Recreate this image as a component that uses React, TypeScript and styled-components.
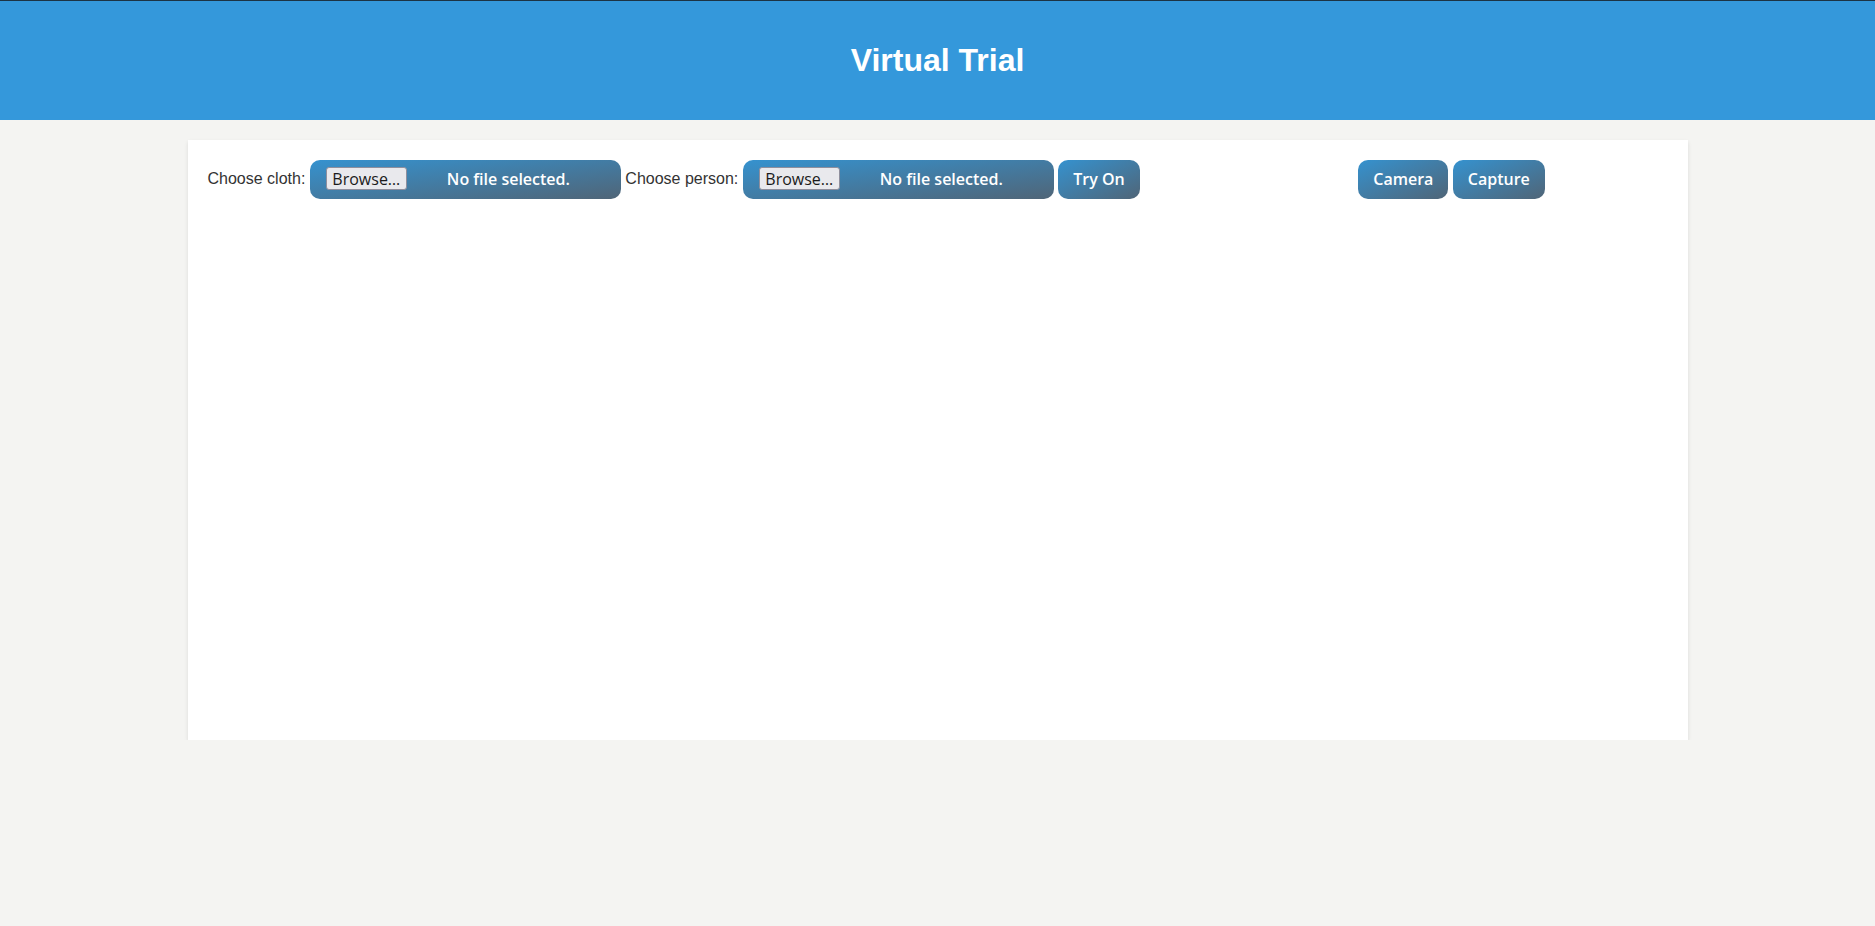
import React from 'react'
import styled, { createGlobalStyle } from 'styled-components'

const colors = {
  header: '#3498db',
  page: '#f4f4f2',
  text: '#333333',
  gradStart: '#3592cf',
  gradEnd: '#506577'
}

const GlobalStyle = createGlobalStyle`
  html, body {
    margin: 0;
    padding: 0;
    background-color: ${colors.page};
    font-family: "Liberation Sans", Arial, sans-serif;
  }
`

const Header = styled.header`
  background-color: ${colors.header};
  border-top: 1px solid #1c3344;
  padding: 20px;
  height: 120px;
  box-sizing: border-box;
  text-align: center;

  h1 {
    margin: 21px 0 0;
    color: #ffffff;
    font-size: 32px;
    font-weight: 700;
    line-height: 37px;
  }
`

const Card = styled.main`
  width: 1500px;
  height: 600px;
  box-sizing: border-box;
  margin: 20px auto 0;
  padding: 20px;
  background-color: #ffffff;
  box-shadow: 0 2px 4px rgba(0, 0, 0, 0.1);
`

const Controls = styled.div`
  display: flex;
  align-items: center;
  gap: 4.5px;
  height: 39px;
`

const Label = styled.span`
  color: ${colors.text};
  font-size: 16px;
  line-height: 18px;
  margin-bottom: 2px;
`

const gradient = `linear-gradient(to bottom right, ${colors.gradStart}, ${colors.gradEnd})`

const FilePicker = styled.label`
  display: inline-flex;
  align-items: center;
  width: 311px;
  height: 39px;
  box-sizing: border-box;
  padding: 0 16px 2px;
  border-radius: 10px;
  background: ${gradient};
  color: #ffffff;
  font-family: "Open Sans", "Noto Sans", sans-serif;
  font-size: 16px;
  font-weight: 600;
  cursor: pointer;

  input {
    display: none;
  }
`

const BrowseButton = styled.span`
  display: inline-flex;
  align-items: center;
  justify-content: center;
  width: 81px;
  height: 23px;
  box-sizing: border-box;
  border: 1px solid #8f8f9d;
  border-radius: 3px;
  background-color: #e9e9ed;
  color: #1b1b1b;
  font-size: 16px;
  font-weight: 400;
`

const FileName = styled.span`
  margin-left: 40px;
`

const ActionButton = styled.button<{ $offset?: number }>`
  height: 39px;
  padding: 0 15px 2px;
  margin-left: ${(p) => p.$offset ?? 0}px;
  border: none;
  border-radius: 10px;
  background: ${gradient};
  color: #ffffff;
  font-family: "Open Sans", "Noto Sans", sans-serif;
  font-size: 16px;
  font-weight: 600;
  cursor: pointer;

  &:hover {
    opacity: 0.9;
  }
`

const FileField = ({ id }: { id: string }) => (
  <FilePicker htmlFor={id}>
    <BrowseButton>Browse…</BrowseButton>
    <FileName>No file selected.</FileName>
    <input id={id} type="file" accept="image/*" />
  </FilePicker>
)

const App = () => {
  return (
    <>
      <GlobalStyle />
      <Header>
        <h1>Virtual Trial</h1>
      </Header>
      <Card>
        <Controls>
          <Label>Choose cloth:</Label>
          <FileField id="cloth" />
          <Label>Choose person:</Label>
          <FileField id="person" />
          <ActionButton>Try On</ActionButton>
          <ActionButton $offset={214}>Camera</ActionButton>
          <ActionButton>Capture</ActionButton>
        </Controls>
      </Card>
    </>
  )
}

export default App
